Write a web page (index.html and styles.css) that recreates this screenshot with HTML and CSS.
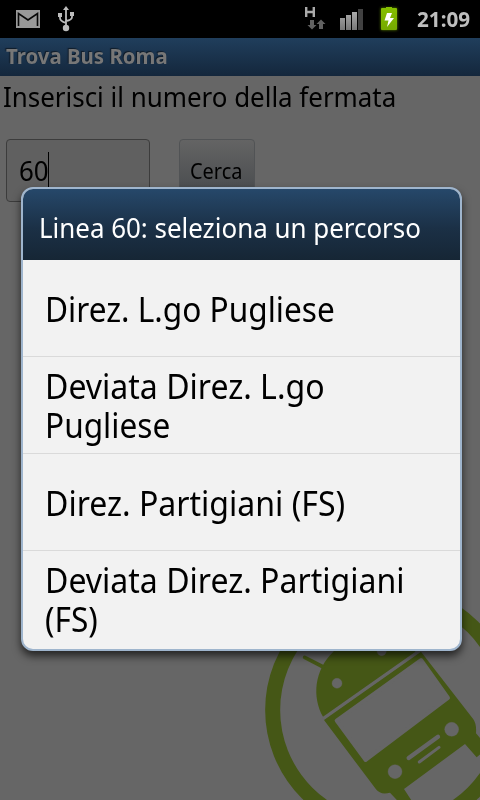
FILE: index.html
```html
<!DOCTYPE html>
<html lang="it">
<head>
<meta charset="utf-8">
<title>Trova Bus Roma</title>
<link rel="stylesheet" href="styles.css">
</head>
<body>
<div class="screen">
  <header class="status">
    <svg class="notifications" width="90" height="38" viewBox="0 0 90 38">
      <path d="M16 10h24v18H16z" fill="#999"/>
      <path d="M18.500 26V13.500L28 20 37.500 13.500V26" fill="none" stroke="#080808" stroke-width="1.600"/>
      <g fill="none" stroke="#bcbcbc" stroke-width="1.800"><path d="M66 9v18M60 15v3q0 3 6 5M72 14v3q0 3-6 4"/></g>
      <path d="M66 6l3 4h-6zM58 13h4v4h-4zM70 12h4v4h-4z" fill="#bcbcbc"/><circle cx="66" cy="28" r="3.200" fill="#bcbcbc"/>
    </svg>
    <svg class="indicators" width="110" height="38" viewBox="300 0 110 38">
      <defs>
        <linearGradient id="bars" x2="0" y2="1"><stop stop-color="#aaa"/><stop offset="1" stop-color="#777"/></linearGradient>
        <linearGradient id="bat" x2="0" y2="1"><stop stop-color="#86c000"/><stop offset="1" stop-color="#75a900"/></linearGradient>
        <filter id="glow" x="-50%" y="-50%" width="200%" height="200%"><feGaussianBlur stdDeviation="1.500"/></filter>
      </defs>
      <path d="M306.200 7v10M313.800 7v10M306 12h8" stroke="#aaa" stroke-width="2.400"/>
      <path d="M310 20h4v5h2.500L312 29.500 307.500 25h2.500zM319 29h4v-5h2.500L321 19.500 316.500 24h2.500z" fill="#616161"/>
      <path d="M340 18h5v12h-5zM346 15h5v15h-5zM352 12h5v18h-5z" fill="url(#bars)"/>
      <path d="M358 9h5v21h-5z" fill="#414141"/>
      <path d="M381 8h16v22h-16z" fill="#5d8500" filter="url(#glow)"/>
      <path d="M381 9q0-1 1-1h4V7h6v1h4q1 0 1 1v20q0 1-1 1h-14q-1 0-1-1z" fill="url(#bat)"/>
      <path d="M387 13h5l-2 5h4l-7 9 1.500-6.500H384.500z" fill="#fff"/>
    </svg>
    <span class="clock">21:09</span>
  </header>
  <div class="titlebar"><span class="app-name">Trova Bus Roma</span></div>
  <main class="content">
    <p class="prompt"><span class="prompt-text">Inserisci il numero della fermata</span></p>
    <div class="form">
      <div class="field"><span class="value">60</span><i class="caret"></i></div>
      <div class="button"><span class="button-text">Cerca</span></div>
    </div>
  </main>
  <svg class="logo" width="230" height="210" viewBox="0 0 690 630">
    <g fill="#455716">
      <circle cx="420" cy="360" r="352" fill="none" stroke="#455716" stroke-width="45"/>
      <path d="M220 382C185 320 193 240 250 185Q280 130 350 105Q450 90 497 187z"/>
      <path d="M164 202l56 29" stroke="#455716" stroke-width="11" stroke-linecap="round"/>
      <path d="M222 390L513 185 670 388Q680 402 678 430L700 455V485L680 502 645 462 462 597 490 640H450L420 608Q392 616 378 598z"/>
    </g>
    <g fill="#666" stroke="#666">
      <path d="M218 386L505 184" stroke-width="8"/>
      <path d="M260 392L513 210 594 324 347 510z" stroke-width="12" stroke-linejoin="round"/>
      <circle cx="261" cy="280" r="15"/><circle cx="395" cy="183" r="14"/>
      <circle cx="605" cy="418" r="21"/><circle cx="435" cy="545" r="21"/>
      <g stroke-linecap="round"><path d="M476 504L564 440" stroke-width="13"/><path d="M508 516L567 472" stroke-width="9"/></g>
    </g>
  </svg>
  <section class="dialog">
    <h1 class="dialog-title"><span class="dialog-title-text">Linea 60: seleziona un percorso</span></h1>
    <ul class="options">
      <li><span class="line line-short">Direz. L.go Pugliese</span></li>
      <li><span class="line">Deviata Direz. L.go</span><span class="line line-short">Pugliese</span></li>
      <li><span class="line">Direz. Partigiani (FS)</span></li>
      <li><span class="line">Deviata Direz. Partigiani</span><span class="line line-short">(FS)</span></li>
    </ul>
  </section>
</div>
</body>
</html>
```
FILE: styles.css
```css
* { box-sizing: border-box; margin: 0; padding: 0; }
body { font-family: "Noto Sans", sans-serif; color: #000; background: #666; }
span { display: inline-block; white-space: nowrap; transform-origin: 0 50%; }
.screen { position: relative; width: 480px; height: 800px; overflow: hidden; background: #666; }
.status { height: 38px; display: flex; background: #000; }
.indicators { margin-left: 210px; }
.clock { margin-left: 7px; font-size: 21px; font-weight: 700; line-height: 39px; color: #bebebe; transform: scaleX(.985); }
.titlebar { height: 38px; padding-left: 6px; background: linear-gradient(#203e5c, #14273c); }
.app-name { font-size: 21px; font-weight: 700; line-height: 37px; color: #777; text-shadow: -1px -1px 1px #101c29; transform: scaleX(.972); }
.content { height: 724px; }
.prompt { height: 63px; padding-left: 3px; font-size: 27px; line-height: 41px; }
.prompt-text { transform: scaleX(.96); }
.form { display: flex; gap: 29px; padding-left: 6px; }
.field { width: 144px; height: 63px; border: 1px solid #3c3c3c; border-radius: 4px; display: flex; padding: 12px 0 0 12px; background: #606060; }
.value { width: 29px; font-size: 27px; line-height: 37px; transform: scaleX(.96); }
.caret { width: 1px; height: 37px; background: #000; }
.button { width: 76px; height: 63px; padding-left: 10px; border: 1px solid #515355; border-radius: 4px; background: linear-gradient(#646464, #45484b); }
.button-text { font-size: 21px; line-height: 63px; transform: scaleX(.95); }
.logo { position: absolute; right: 0; bottom: 0; }
.dialog { position: absolute; left: 21px; top: 187px; width: 441px; height: 464px; border: 2px solid #9fb5cd; border-radius: 12px; overflow: hidden; background: #f2f2f2; box-shadow: 0 5px 9px rgba(0,0,0,.65); }
.dialog-title { height: 71px; padding-left: 16px; font-size: 27px; font-weight: 400; line-height: 77px; color: #fff; background: linear-gradient(#26486a, #1b3046 55%, #162635); }
.dialog-title-text { transform: scaleX(.96); }
.options { list-style: none; }
.options li { height: 97px; padding: 2px 0 0 22px; display: flex; flex-direction: column; justify-content: center; align-items: flex-start; border-bottom: 1px solid #dadada; }
.options li:last-child { padding-top: 0; border-bottom: 0; }
.line { font-size: 34px; line-height: 39px; transform: scaleX(.942); }
.line-short { transform: scaleX(.93); }
```
